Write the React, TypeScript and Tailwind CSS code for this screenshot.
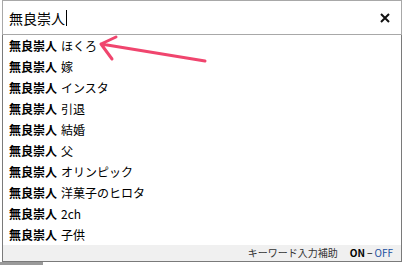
const items = [
  "ほくろ",
  "嫁",
  "インスタ",
  "引退",
  "結婚",
  "父",
  "オリンピック",
  "洋菓子のヒロタ",
  "2ch",
  "子供",
];

const font = "font-['Noto_Sans_CJK_JP','Noto_Sans',sans-serif]";

export default function App() {
  return (
    <div className={`relative w-[403px] h-[265px] bg-white overflow-hidden text-black ${font}`}>
      <div className="ml-[2px] w-[400px] h-[35px] border border-[#a8a8a8] flex items-center justify-between pl-[6px] pr-[11px]">
        <div className="flex items-center text-[14px] leading-none">
          <span>無良崇人</span>
          <span className="ml-[1px] w-px h-[16px] bg-black" />
        </div>
        <svg width="10" height="10" viewBox="0 0 10 10">
          <path d="M1 1 L9 9 M9 1 L1 9" stroke="#111" strokeWidth="2" />
        </svg>
      </div>
      <div className="ml-[2px] w-[400px] border-x border-b border-[#7a7a7a]">
        {items.map((s) => (
          <div key={s} className="h-[21px] flex items-center pl-[6px] text-[12px] leading-none">
            <span className="font-bold">無良崇人</span>
            <span className="ml-[4px]">{s}</span>
          </div>
        ))}
        <div className="h-[16px] bg-[#f0f0f0] flex items-center justify-end pr-[8px] text-[10px] leading-none">
          <span className="text-[#333]">キーワード入力補助</span>
          <span className="ml-[12px] font-bold">ON</span>
          <span className="mx-[2px]">−</span>
          <span className="text-[#1a4fa0]">OFF</span>
        </div>
      </div>
      <div className="w-[43px] h-[4px] bg-[#9a9a9a]" />
      <svg className="absolute left-0 top-0" width="403" height="265" viewBox="0 0 403 265">
        <path
          d="M205 61 L101 44 M116 37 L101 44 L112 59"
          fill="none"
          stroke="#f0456e"
          strokeWidth="3"
          strokeLinecap="round"
          strokeLinejoin="round"
        />
      </svg>
    </div>
  );
}
